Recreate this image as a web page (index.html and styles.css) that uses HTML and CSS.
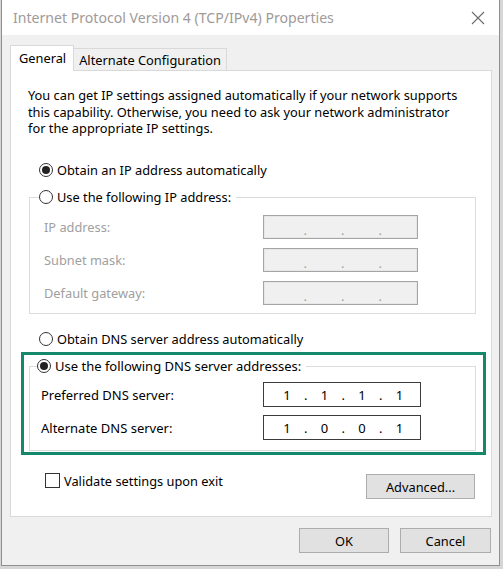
FILE: index.html
```html
<!DOCTYPE html>
<html>
<head>
<meta charset="utf-8">
<link rel="stylesheet" href="styles.css">
</head>
<body>
<div class="window">
  <div class="titlebar">
    <span class="title">Internet Protocol Version 4 (TCP/IPv4) Properties</span>
    <svg class="close" width="14" height="14" viewBox="0 0 14 14"><path d="M1 1L13 13M13 1L1 13" stroke="#6a6a6a" stroke-width="1.1" fill="none"/></svg>
  </div>
  <div class="content">
    <div class="tabs">
      <div class="tab active">General</div>
      <div class="tab">Alternate Configuration</div>
    </div>
    <div class="panel">
      <p class="intro">You can get IP settings assigned automatically if your network supports this capability. Otherwise, you need to ask your network administrator for the appropriate IP settings.</p>
      <div class="radio-row r1"><span class="radio checked"></span><span>Obtain an IP address automatically</span></div>
      <fieldset class="group ipgroup">
        <legend><span class="radio"></span><span>Use the following IP address:</span></legend>
        <div class="rows ip-rows">
          <div class="row"><span class="lbl disabled">IP address:</span><div class="ipbox off"><span></span><i>.</i><span></span><i>.</i><span></span><i>.</i><span></span></div></div>
          <div class="row"><span class="lbl disabled">Subnet mask:</span><div class="ipbox off"><span></span><i>.</i><span></span><i>.</i><span></span><i>.</i><span></span></div></div>
          <div class="row"><span class="lbl disabled">Default gateway:</span><div class="ipbox off"><span></span><i>.</i><span></span><i>.</i><span></span><i>.</i><span></span></div></div>
        </div>
      </fieldset>
      <div class="radio-row r3"><span class="radio"></span><span>Obtain DNS server address automatically</span></div>
      <div class="highlight">
        <fieldset class="group dnsgroup">
          <legend><span class="radio checked"></span><span>Use the following DNS server addresses:</span></legend>
          <div class="rows dns-rows">
            <div class="row"><span class="lbl">Preferred DNS server:</span><div class="ipbox on"><span>1</span><i>.</i><span>1</span><i>.</i><span>1</span><i>.</i><span>1</span></div></div>
            <div class="row"><span class="lbl">Alternate DNS server:</span><div class="ipbox on"><span>1</span><i>.</i><span>0</span><i>.</i><span>0</span><i>.</i><span>1</span></div></div>
          </div>
        </fieldset>
      </div>
      <div class="bottom-row">
        <div class="check-row"><span class="checkbox"></span><span>Validate settings upon exit</span></div>
        <button class="btn advanced">Advanced...</button>
      </div>
    </div>
    <div class="footer">
      <button class="btn ok">OK</button>
      <button class="btn cancel">Cancel</button>
    </div>
  </div>
</div>
</body>
</html>
```
FILE: styles.css
```css
* { box-sizing: border-box; }
html, body { margin: 0; padding: 0; }
body {
  background: #d6d6d6;
  font-family: "Noto Sans", "Open Sans", sans-serif;
  font-size: 12.8px;
  color: #000;
  width: 503px;
  height: 569px;
  overflow: hidden;
}
.window {
  margin-left: 1px;
  width: 499px;
  height: 566px;
  border: 1px solid #8f8f8f;
  border-top: none;
  background: #f0f0f0;
  display: flex;
  flex-direction: column;
}
.titlebar {
  height: 35px;
  background: #fff;
  display: flex;
  align-items: center;
  justify-content: space-between;
  padding: 0 14px 0 11px;
  flex: none;
}
.title {
  font-size: 14.1px;
  color: #a09a98;
}
.close { display: block; }
.content {
  padding: 10px 7px 0 8px;
}
.tabs {
  display: flex;
  align-items: flex-start;
  height: 25px;
}
.tab {
  border: 1px solid #d9d9d9;
  border-bottom: none;
  background: #f0f0f0;
  height: 22px;
  margin-top: 3px;
  padding: 2px 5px 0 5px;
  line-height: 18px;
}
.tab.active {
  background: #fff;
  height: 26px;
  margin-top: 0;
  padding: 3px 7px 0 8px;
  position: relative;
  z-index: 1;
  margin-right: -1px;
}
.panel {
  background: #fff;
  border: 1px solid #d9d9d9;
  height: 447px;
  padding: 0;
}
.intro {
  margin: 16px 0 0 0;
  padding: 0 22px 0 17px;
  line-height: 16.5px;
}
.radio-row {
  display: flex;
  align-items: center;
  height: 17px;
  gap: 4px;
}
.r1 { margin: 25px 0 0 28px; }
.r3 { margin: 16.5px 0 0 28px; }
.radio {
  width: 14px;
  height: 14px;
  border: 1px solid #333;
  border-radius: 50%;
  background: #fff;
  display: inline-flex;
  align-items: center;
  justify-content: center;
  flex: none;
}
.radio.checked::after {
  content: "";
  width: 8px;
  height: 8px;
  border-radius: 50%;
  background: #222;
}
.group {
  border: 1px solid #dcdcdc;
  padding: 0;
  margin: 0;
  min-width: 0;
}
.group legend {
  display: flex;
  align-items: center;
  gap: 4px;
  height: 17px;
  padding: 0 5px 0 0;
}
.ipgroup {
  margin: 10px 15px 0 18px;
}
.ipgroup legend { margin-left: 9px; }
.rows {
  display: flex;
  flex-direction: column;
}
.ip-rows {
  padding: 9.5px 0 8px 14px;
  gap: 9px;
}
.row {
  display: flex;
  align-items: center;
}
.ip-rows .lbl { width: 219px; }
.lbl.disabled { color: #a0a0a0; }
.ipbox {
  display: flex;
  align-items: center;
  padding-left: 13px;
}
.ipbox span, .ipbox i {
  width: 18.75px;
  text-align: center;
  font-style: normal;
}
.ipbox.off {
  width: 155px;
  height: 24px;
  background: #f0f0f0;
  border: 1px solid #a5a5a5;
  box-shadow: inset 0 0 0 1px #e6e6e6;
  color: #a0a0a0;
  padding-top: 6px;
}
.ipbox.on {
  width: 158px;
  height: 25px;
  background: #fff;
  border: 1px solid #3c3c3c;
  font-size: 13px;
  padding-left: 13.5px;
}
.highlight {
  margin: 4.5px 5px 0 10px;
  border: 3px solid #15876a;
  padding: 2.5px 7px 1.5px 5px;
}
.dnsgroup legend { margin-left: 7px; }
.dns-rows {
  padding: 7.5px 0 9.5px 11px;
  gap: 8px;
}
.dns-rows .lbl { width: 222px; font-size: 13px; }
.dnsgroup legend span:last-child { font-size: 13px; }
.bottom-row {
  display: flex;
  justify-content: space-between;
  align-items: flex-start;
  margin: 18px 16px 0 34px;
}
.check-row {
  display: flex;
  align-items: center;
  gap: 4px;
  height: 15px;
}
.checkbox {
  width: 15px;
  height: 15px;
  border: 1px solid #333;
  background: #fff;
  flex: none;
}
.btn {
  font-family: inherit;
  font-size: 12.8px;
  color: #000;
  background: #e1e1e1;
  border: 1px solid #adadad;
  height: 25px;
  padding: 0;
  border-radius: 0;
}
.advanced { width: 109px; margin-top: 1px; }
.footer {
  display: flex;
  justify-content: flex-end;
  gap: 11px;
  margin-top: 11px;
  padding-right: 1px;
}
.ok { width: 90px; }
.cancel { width: 91px; }
```
